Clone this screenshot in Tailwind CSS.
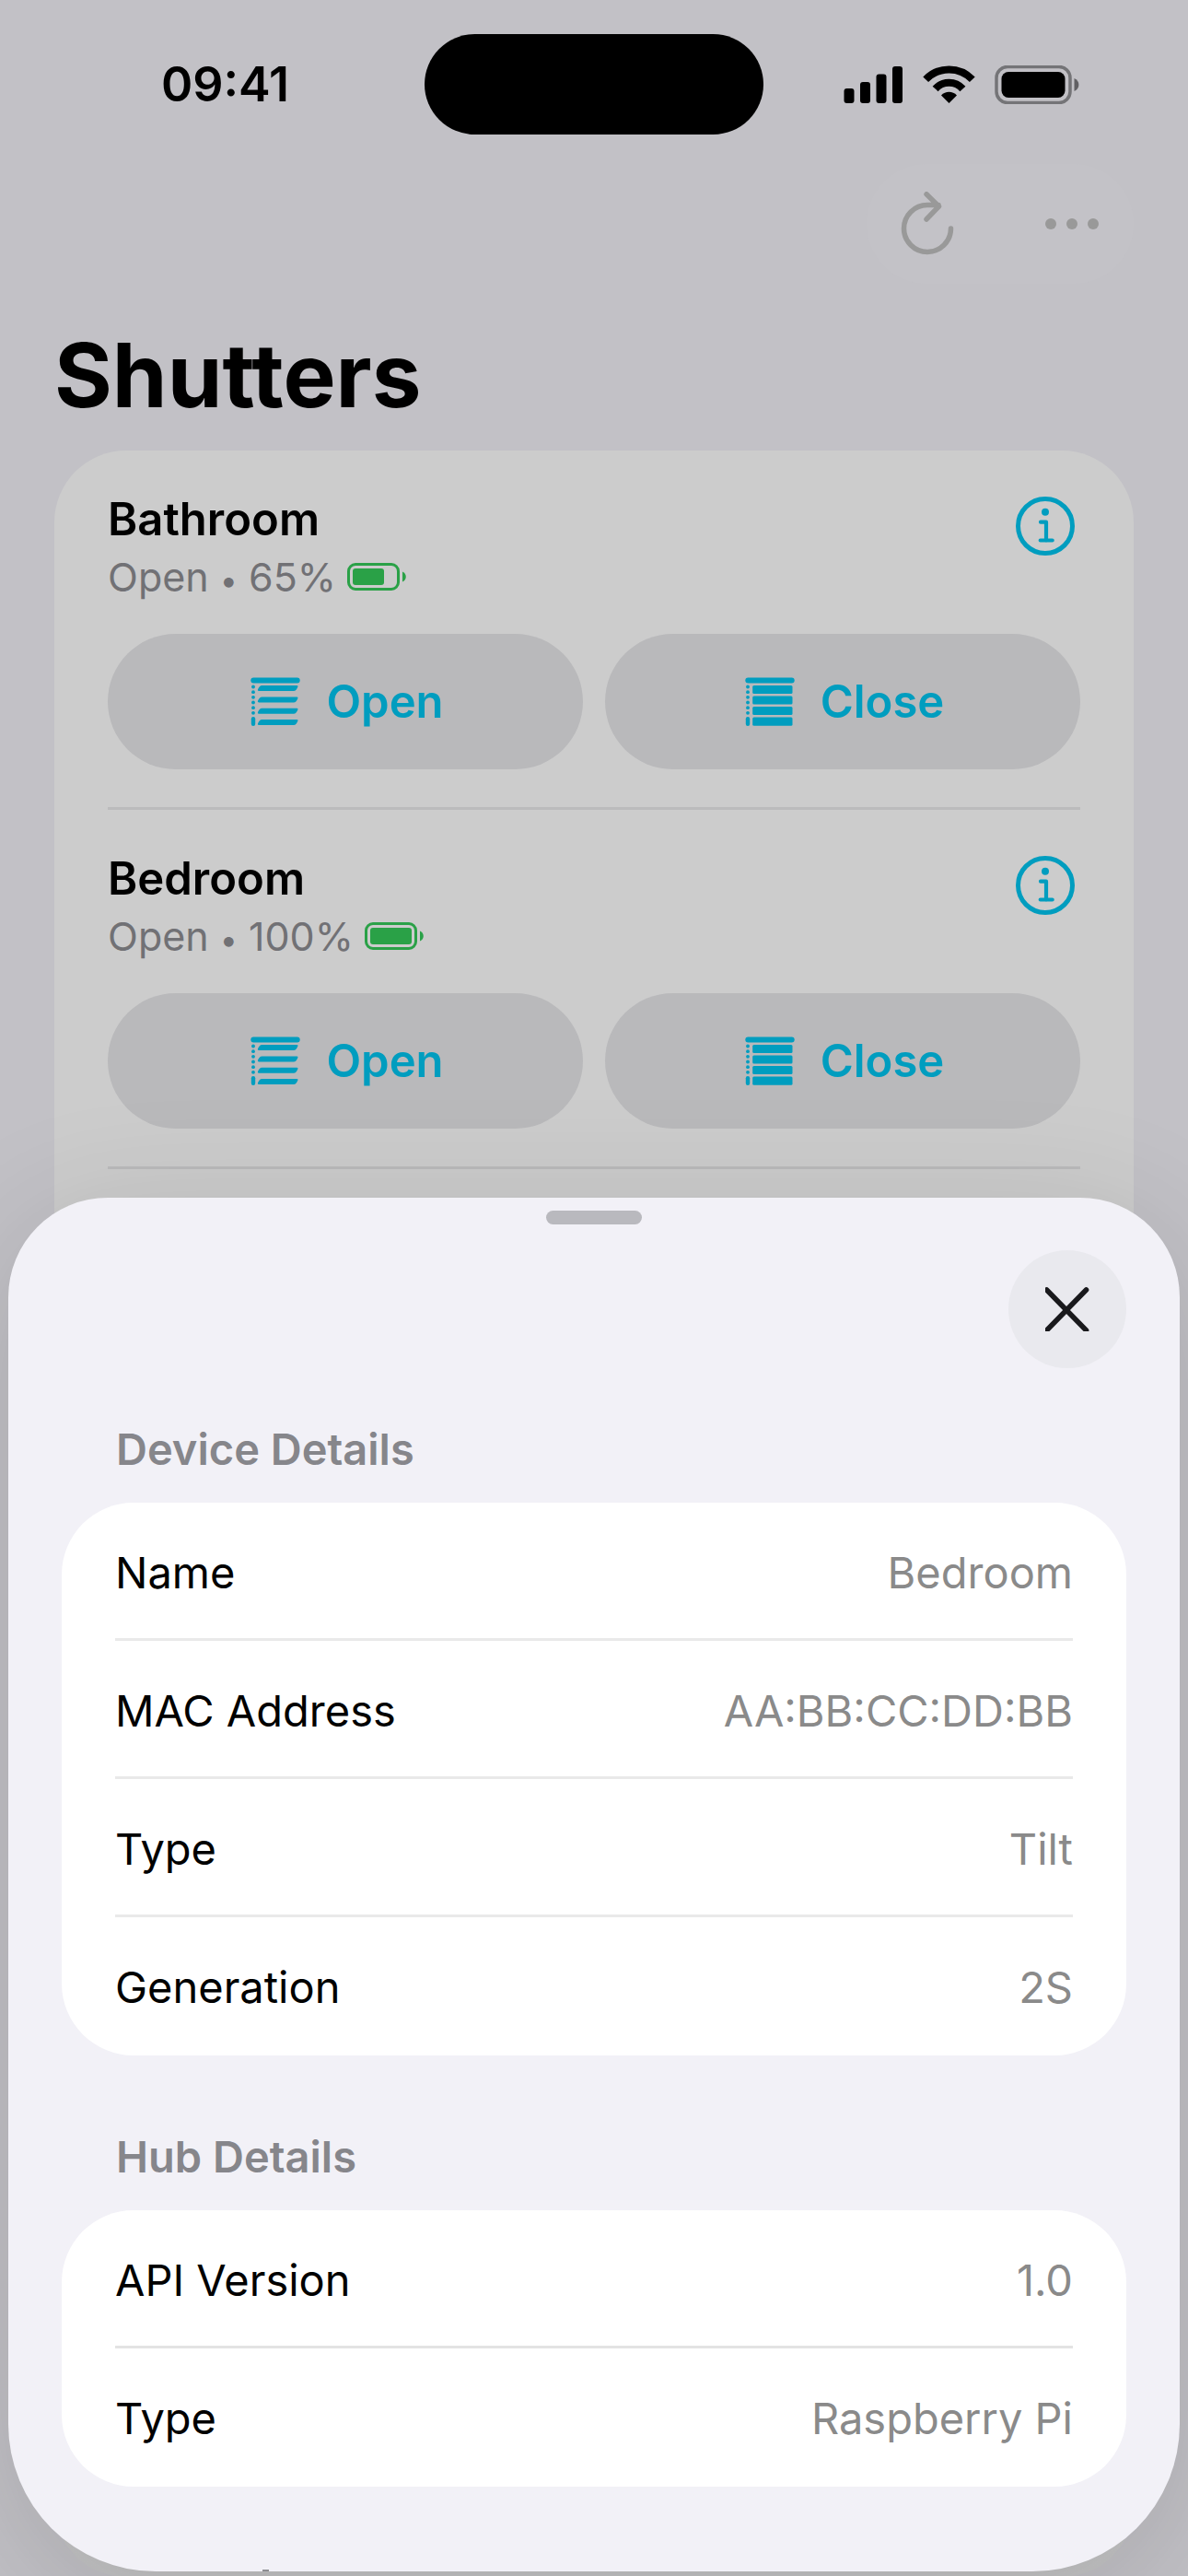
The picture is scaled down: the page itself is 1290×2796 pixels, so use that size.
<!DOCTYPE html>
<html lang="en">
<head>
<meta charset="utf-8">
<meta name="viewport" content="width=device-width, initial-scale=1">
<title>Shutters</title>
<script src="https://cdn.jsdelivr.net/npm/@tailwindcss/browser@4"></script>
</head>
<body class="bg-[#c2c1c6] font-['Inter',sans-serif] text-black">
<!-- shared icons -->
<svg class="hidden" aria-hidden="true">
  <symbol id="info" viewBox="0 0 64 64">
    <circle cx="32" cy="32" r="29.5" fill="none" stroke="currentColor" stroke-width="5"/>
    <circle cx="32" cy="16.8" r="4" fill="currentColor"/>
    <path d="M27 27.7h6v20M26.700 47.500h13" fill="none" stroke="currentColor" stroke-width="4.200" stroke-linecap="round" stroke-linejoin="round"/>
  </symbol>
  <symbol id="cord" viewBox="0 0 54 54">
    <rect x="0.300" y="0.500" width="53.400" height="6" rx="3"/>
    <circle cx="3" cy="10.500" r="1.900"/><circle cx="3" cy="16.200" r="1.900"/><circle cx="3" cy="21.800" r="1.900"/><circle cx="3" cy="27.500" r="1.900"/><circle cx="3" cy="33.200" r="1.900"/><circle cx="3" cy="38.800" r="1.900"/>
    <rect x="0.800" y="43" width="4.400" height="10" rx="2.200"/>
  </symbol>
  <symbol id="blind-open" viewBox="0 0 54 54">
    <use href="#cord"/>
    <path id="slat" d="M12.500 9H50.500Q52 9 51.400 10.500C50.300 13 49.200 15 46.700 15H9Q7.200 15 8 13.200C9.300 10.800 10.200 9 12.500 9Z"/>
    <use href="#slat" y="12.400"/><use href="#slat" y="24.700"/><use href="#slat" y="37"/>
  </symbol>
  <symbol id="blind-closed" viewBox="0 0 54 54">
    <use href="#cord"/>
    <rect x="8.200" y="9" width="43.300" height="9" rx="1.500"/><rect x="8.200" y="20.500" width="43.300" height="9" rx="1.500"/><rect x="8.200" y="32" width="43.300" height="9" rx="1.500"/><rect x="8.200" y="43.500" width="43.300" height="9.300" rx="1.500"/>
  </symbol>
  <symbol id="battery-shell" viewBox="0 0 64 30">
    <rect x="1.500" y="1.500" width="54" height="27" rx="7.500" fill="none" stroke="currentColor" stroke-width="3"/>
    <path d="M60 9.500c5 2 5 9 0 11z" fill="currentColor"/>
  </symbol>
</svg>

<div class="grid min-h-screen grid-cols-1 overflow-hidden">
  <!-- list behind the sheet -->
  <div class="col-start-1 row-start-1 flex flex-col">
    <div class="grid grid-cols-[1fr_368px_1fr] items-center pt-[37px]">
      <time class="pl-7 text-center text-[52px] leading-[60px] font-semibold">09:41</time>
      <div class="h-[109px] rounded-full bg-black"></div>
      <div class="flex justify-center pr-8">
        <svg class="h-[42px] w-[256px]" viewBox="0 0 256 42" aria-label="Signal, Wi-Fi and battery">
          <rect x="0.500" y="25" width="11" height="16" rx="3"/><rect x="18" y="18" width="11" height="23" rx="3"/><rect x="35.500" y="9.500" width="11" height="31.500" rx="3"/><rect x="53" y="1" width="11" height="40" rx="3"/>
          <path d="M114.500 41L106 32.500C110.500 27.500 118.500 27.500 123 32.500Z"/>
          <path d="M99.600 25.500C107.500 16.500 121.500 16.500 129.400 25.500" fill="none" stroke="#000" stroke-width="8"/>
          <path d="M89.200 15.300C103 0.800 126 0.800 139.800 15.300" fill="none" stroke="#000" stroke-width="8"/>
          <rect x="166" y="1.500" width="80" height="39" rx="12" fill="none" stroke="#000" stroke-opacity=".4" stroke-width="3.500"/>
          <rect x="171.500" y="7" width="69" height="28" rx="7.500"/>
          <path d="M250.500 14c6.500 2.500 6.500 11.500 0 14z" fill-opacity=".5"/>
        </svg>
      </div>
    </div>

    <header class="flex flex-col px-[59px]">
      <div class="mt-8 flex h-[130px] items-center self-end rounded-full bg-[#c3c2c7] text-[#999999]">
        <button type="button" aria-label="Refresh" class="flex h-full w-[145px] items-center justify-center pr-[14px]">
          <svg class="h-[70px] w-[58px]" viewBox="0 0 58 70" fill="none" stroke="currentColor" stroke-width="5.500" stroke-linecap="round" stroke-linejoin="round">
            <path d="M54.500 40A25.500 25.500 0 1 1 29 14.500H41M28 2.800L41.500 16L28 30"/>
          </svg>
        </button>
        <button type="button" aria-label="More" class="flex h-full w-[145px] items-center justify-center pl-[10px]">
          <svg class="h-3 w-[58px]" viewBox="0 0 58 12" fill="currentColor"><circle cx="6" cy="6" r="6"/><circle cx="29" cy="6" r="6"/><circle cx="52" cy="6" r="6"/></svg>
        </button>
      </div>
      <h1 class="mt-[39px] text-[96px] leading-[120px] font-bold">Shutters</h1>
    </header>

    <main class="mx-[59px] mt-[22px] flex-1 rounded-[78px] bg-linear-to-b from-[#cccccc] from-40% to-[#c4c4c5] px-[58px]">
      <section class="flex flex-col border-b-3 border-[#bbbbbc] pt-[45px] pb-[41px]">
        <div class="flex items-start justify-between">
          <div>
            <h2 class="text-[49px] leading-[60px] font-semibold">Bathroom</h2>
            <p class="mt-[5px] flex items-center gap-3 text-[43px] leading-[54px] text-[#717175]"><span>Open <span class="text-[34px] leading-none">•</span> 65%</span>
              <svg class="h-[30px] w-16 text-[#2aa147]" viewBox="0 0 64 30" fill="currentColor"><use href="#battery-shell"/><rect x="6" y="6" width="34" height="18" rx="3"/></svg>
            </p>
          </div>
          <button type="button" aria-label="Bathroom details" class="mt-[5px] mr-[6px] text-[#009dbf]"><svg class="size-16"><use href="#info"/></svg></button>
        </div>
        <div class="mt-[35px] grid grid-cols-2 gap-6 text-[49px] leading-[60px] font-semibold text-[#009dbf]">
          <button type="button" class="flex h-[147px] items-center justify-center gap-7 rounded-full bg-[#b9b9bb] pl-1"><svg class="size-[54px]" fill="currentColor"><use href="#blind-open"/></svg>Open</button>
          <button type="button" class="flex h-[147px] items-center justify-center gap-7 rounded-full bg-[#b9b9bb] pl-1"><svg class="size-[54px]" fill="currentColor"><use href="#blind-closed"/></svg>Close</button>
        </div>
      </section>
      <section class="flex flex-col border-b-3 border-[#bbbbbc] pt-[45px] pb-[41px]">
        <div class="flex items-start justify-between">
          <div>
            <h2 class="text-[49px] leading-[60px] font-semibold">Bedroom</h2>
            <p class="mt-[5px] flex items-center gap-3 text-[43px] leading-[54px] text-[#717175]"><span>Open <span class="text-[34px] leading-none">•</span> 100%</span>
              <svg class="h-[30px] w-16 text-[#2aa147]" viewBox="0 0 64 30" fill="currentColor"><use href="#battery-shell"/><rect x="6" y="6" width="45" height="18" rx="3"/></svg>
            </p>
          </div>
          <button type="button" aria-label="Bedroom details" class="mt-[5px] mr-[6px] text-[#009dbf]"><svg class="size-16"><use href="#info"/></svg></button>
        </div>
        <div class="mt-[35px] grid grid-cols-2 gap-6 text-[49px] leading-[60px] font-semibold text-[#009dbf]">
          <button type="button" class="flex h-[147px] items-center justify-center gap-7 rounded-full bg-[#b9b9bb] pl-1"><svg class="size-[54px]" fill="currentColor"><use href="#blind-open"/></svg>Open</button>
          <button type="button" class="flex h-[147px] items-center justify-center gap-7 rounded-full bg-[#b9b9bb] pl-1"><svg class="size-[54px]" fill="currentColor"><use href="#blind-closed"/></svg>Close</button>
        </div>
      </section>
    </main>
  </div>

  <!-- details sheet -->
  <div role="dialog" aria-label="Details" class="relative col-start-1 row-start-1 mx-[9px] mt-[1300px] mb-[6px] flex flex-col self-end rounded-t-[108px] rounded-b-[160px] bg-[#f2f1f7] px-[58px] pb-[92px] shadow-[0_30px_150px_rgba(0,0,0,0.14)]">
    <div class="mt-[14px] h-[15px] w-[104px] self-center rounded-full bg-[#b9b9be]"></div>
    <button type="button" aria-label="Close" class="mt-7 flex size-32 items-center justify-center self-end rounded-full bg-[#e9e9ee]">
      <svg class="size-12" viewBox="0 0 48 48" fill="none" stroke="#19191c" stroke-width="5.600" stroke-linecap="round"><path d="M1.500 3L44.500 47M44.500 3L1.500 47"/></svg>
    </button>
    <section class="mt-[58px]">
      <h2 class="px-[59px] text-[47px] leading-[60px] font-semibold text-[#86868b]">Device Details</h2>
      <dl class="mt-7 rounded-[78px] bg-white px-[58px] text-[47px] leading-[60px]">
        <div class="flex justify-between border-b-3 border-[#e9e9e9] pt-[46px] pb-[41px]"><dt>Name</dt><dd class="text-[#8a8a8a]">Bedroom</dd></div>
        <div class="flex justify-between border-b-3 border-[#e9e9e9] pt-[46px] pb-[41px]"><dt>MAC Address</dt><dd class="text-[#8a8a8a]">AA:BB:CC:DD:BB</dd></div>
        <div class="flex justify-between border-b-3 border-[#e9e9e9] pt-[46px] pb-[41px]"><dt>Type</dt><dd class="text-[#8a8a8a]">Tilt</dd></div>
        <div class="flex justify-between pt-[46px] pb-[44px]"><dt>Generation</dt><dd class="text-[#8a8a8a]">2S</dd></div>
      </dl>
    </section>
    <section class="mt-20">
      <h2 class="px-[59px] text-[47px] leading-[60px] font-semibold text-[#86868b]">Hub Details</h2>
      <dl class="mt-7 rounded-[78px] bg-white px-[58px] text-[47px] leading-[60px]">
        <div class="flex justify-between border-b-3 border-[#e3e3e3] pt-[46px] pb-[41px]"><dt>API Version</dt><dd class="text-[#8a8a8a]">1.0</dd></div>
        <div class="flex justify-between pt-[46px] pb-[44px]"><dt>Type</dt><dd class="text-[#8a8a8a]">Raspberry Pi</dd></div>
      </dl>
    </section>
    <div class="absolute bottom-0 left-[276px] h-[2px] w-[7px] bg-[#8e8e92]"></div>
  </div>
</div>
</body>
</html>
